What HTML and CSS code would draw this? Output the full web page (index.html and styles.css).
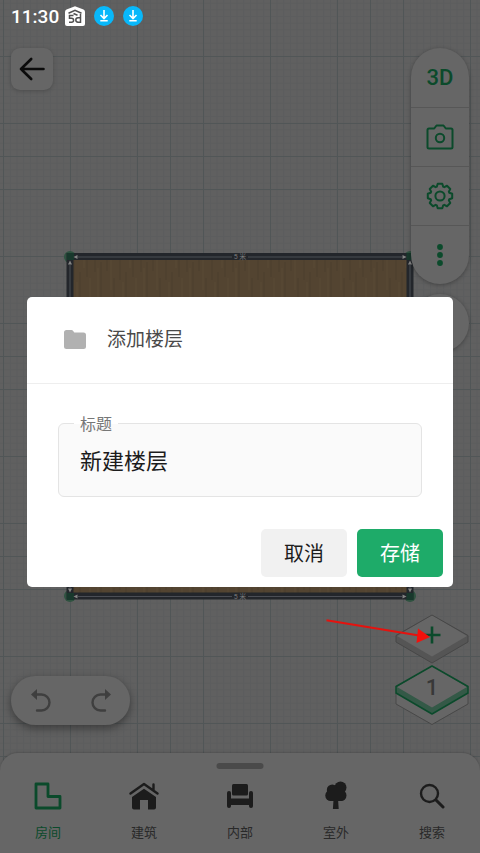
FILE: index.html
```html
<!DOCTYPE html>
<html lang="zh-CN">
<head>
<meta charset="utf-8">
<meta name="viewport" content="width=device-width, initial-scale=1">
<title>添加楼层</title>
<link rel="stylesheet" href="styles.css">
</head>
<body>
<div class="app">
  <svg class="plan" viewBox="0 0 480 853" preserveAspectRatio="xMidYMid slice" aria-hidden="true">
    <defs>
      <pattern id="fine" x="3.2" y="56" width="6.667" height="6.667" patternUnits="userSpaceOnUse">
        <path d="M0 .5H7M.5 0V7" stroke="#595b5c" stroke-width="1" fill="none" opacity=".65"/>
      </pattern>
      <pattern id="grid" x="3" y="56" width="200" height="200" patternUnits="userSpaceOnUse">
        <path d="M.5 0V200M67.5 0V200M134.5 0V200M167.5 0V200M0 .5H200M0 67.5H200M0 100.5H200M0 133.5H200" stroke="#515657" fill="none"/>
      </pattern>
      <pattern id="wood" width="46" height="62" patternUnits="userSpaceOnUse">
        <rect width="46" height="62" fill="#534431"/>
        <path d="M3 0v24M9 14v40M15 4v19M22 30v29M28 2v30M34 24v34M41 6v23" stroke="#4b3d2c" fill="none"/>
        <path d="M6 20v32M12 0v12M19 8v34M31 34v22M38 0v20M44 30v32" stroke="#594935" fill="none"/>
      </pattern>
    </defs>
    <rect width="480" height="853" fill="#606060"/>
    <rect width="480" height="853" fill="url(#fine)"/>
    <rect width="480" height="853" fill="url(#grid)"/>
    <circle cx="70" cy="257" r="6" fill="#2f5240"/>
    <circle cx="410" cy="257" r="6" fill="#2f5240"/>
    <circle cx="70" cy="596" r="6" fill="#2f5240"/>
    <circle cx="410" cy="596" r="6" fill="#2f5240"/>
    <rect x="70" y="256.500" width="340" height="339.500" fill="url(#wood)" stroke="#23262b" stroke-width="7"/>
    <path d="M78 257H232M248 257H402M78 596.500H232M248 596.500H402M70 265V588M410 265V588" stroke="#4b4e55" fill="none"/>
    <path d="M67 253h7v7h-7zM406.500 253h7v7h-7zM67 593h7v7h-7zM406.500 593h7v7h-7z" fill="#18382c"/>
    <path d="M73.500 257l4-2v4zM406.500 257l-4-2v4zM73.500 596.500l4-2v4zM406.500 596.500l-4-2v4zM70 260.500l-2 4h4zM410 260.500l-2 4h4zM70 592.500l-2-4h4zM410 592.500l-2-4h4z" fill="#858585"/>
    <text class="measure" x="240" y="259" text-anchor="middle">5 米</text>
    <text class="measure" x="240" y="599" text-anchor="middle">5 米</text>
  </svg>

  <header class="status">
    <span class="clock">11:30</span>
    <svg class="status-house" viewBox="0 0 20 20" aria-hidden="true">
      <path d="M10 .2 18.500 3.500Q20 4.200 20 6V18Q20 20 18 20H2Q0 20 0 18V6Q0 4.200 1.500 3.500z" fill="#fff"/>
      <path d="M3.500 7.200 10 4.300 16.500 7.200M8.500 9.500H4.500V12.200H6.500Q8.600 12.300 8.600 14.200T6.500 16.300H4M15.500 8V16.300H13Q10.800 16 10.800 14T13 11.800H15.500M8.500 7.500l4 1.800" fill="none" stroke="#505050" stroke-width="1.500"/>
    </svg>
    <svg class="status-download" viewBox="0 0 20 20" aria-hidden="true"><circle cx="10" cy="10" r="10" fill="#08b8fb"/><path d="M10 4v8M6.500 9l3.500 3.500L13.500 9M6.300 14.800h7.400" fill="none" stroke="#fff" stroke-width="1.600"/></svg>
    <svg class="status-download" viewBox="0 0 20 20" aria-hidden="true"><circle cx="10" cy="10" r="10" fill="#08b8fb"/><path d="M10 4v8M6.500 9l3.500 3.500L13.500 9M6.300 14.800h7.400" fill="none" stroke="#fff" stroke-width="1.600"/></svg>
  </header>

  <main class="workspace">
    <div class="row">
      <button class="back" type="button" aria-label="返回">
        <svg width="26" height="24" viewBox="0 0 26 24" fill="none" stroke="#0b0b0b" stroke-width="2.600" stroke-linecap="round" stroke-linejoin="round"><path d="M24.500 12H2M12.200 2 2 12l10.200 10"/></svg>
      </button>
      <div class="side">
        <div class="tools">
          <button type="button">3D</button>
          <button type="button" aria-label="相机">
            <svg width="28" height="26" viewBox="0 0 28 26" fill="none" stroke="#0b4a2b" stroke-width="2" stroke-linejoin="round"><path d="M3 4.500h5.200l2.300-3h7l2.300 3H25Q26.500 4.500 26.500 6v17Q26.500 24.500 25 24.500H3Q1.500 24.500 1.500 23V6Q1.500 4.500 3 4.500z"/><circle cx="14" cy="14" r="4.200"/></svg>
          </button>
          <button type="button" aria-label="设置">
            <svg width="28" height="28" viewBox="0 0 28 28" fill="none" stroke="#0b4a2b" stroke-width="2" stroke-linejoin="round"><path d="M11.700 1.800h4.600L17.200 4.700 18.300 5.160 21 3.750 24.250 7 22.840 9.700 23.300 10.800 26.200 11.700v4.600L23.300 17.200 22.840 18.300 24.250 21 21 24.250 18.300 22.840 17.200 23.300 16.300 26.200h-4.600L10.800 23.300 9.700 22.840 7 24.250 3.750 21 5.160 18.300 4.700 17.200 1.800 16.300v-4.600L4.700 10.800 5.160 9.700 3.750 7 7 3.750 9.700 5.160 10.800 4.700z"/><circle cx="14" cy="14" r="4.600"/></svg>
          </button>
          <button type="button" aria-label="更多">
            <svg width="8" height="24" viewBox="0 0 8 24" fill="#0b4a2b"><circle cx="4" cy="4" r="2.900"/><circle cx="4" cy="12" r="2.900"/><circle cx="4" cy="20" r="2.900"/></svg>
          </button>
        </div>
        <button class="round" type="button" aria-label="视图"></button>
      </div>
    </div>

    <div class="row row-end">
      <div class="history">
        <button type="button" aria-label="撤销">
          <svg width="20" height="24" viewBox="0 0 20 24"><path d="M0 5.500 6 0v11z" fill="#3f3f3f"/><path d="M5 5.500h5.500a7.800 7.800 0 0 1 0 16H6" fill="none" stroke="#3f3f3f" stroke-width="2.400" stroke-linecap="round"/></svg>
        </button>
        <button type="button" aria-label="重做">
          <svg width="20" height="24" viewBox="0 0 20 24"><path d="M20 5.500 14 0v11z" fill="#3f3f3f"/><path d="M15 5.500H9.500a7.800 7.800 0 0 0 0 16H14" fill="none" stroke="#3f3f3f" stroke-width="2.400" stroke-linecap="round"/></svg>
        </button>
      </div>
      <div class="floors">
        <button type="button" aria-label="添加楼层">
          <svg width="74" height="50" viewBox="0 0 74 50"><path d="M37 1 73 21.500V28L37 49 1 28V21.500z" fill="#555"/><path d="M37 1 72 22 37 42.500 2 22z" fill="#666"/><path d="M37 1 73 21.500V28L37 49 1 28V21.500z" fill="none" stroke="#474747" stroke-linejoin="round"/><path d="M37 12.500v17M28.500 21h17" stroke="#0b4a2b" stroke-width="2.600"/></svg>
        </button>
        <button class="floor" type="button" aria-label="楼层 1">
          <svg width="74" height="60" viewBox="0 0 74 60"><path d="M1 28V39L37 59.500 73 39V28" fill="#666" stroke="#484848"/><path d="M37 1 73 21.500V28L37 49 1 28V21.500z" fill="#345947"/><path d="M37 1 72 22 37 42.500 2 22z" fill="#666"/><path d="M37 1 73 21.500V28L37 49 1 28V21.500z" fill="none" stroke="#0b4a2b" stroke-width="1.500" stroke-linejoin="round"/><text x="37" y="30" text-anchor="middle">1</text></svg>
        </button>
      </div>
    </div>
  </main>

  <nav class="tabs" aria-label="目录">
    <span class="handle"></span>
    <a class="tab current" href="#room">
      <svg width="28" height="28" viewBox="0 0 28 28" fill="none" stroke="#0b4a2b" stroke-width="2.800" stroke-linejoin="round"><path d="M2 2H14V14.500H26V26H2z"/></svg>
      房间
    </a>
    <a class="tab" href="#building">
      <svg width="30" height="28" viewBox="0 0 30 28"><path d="M1.500 11.500 15 2l13.500 9.500M24.500 2.500V8" fill="none" stroke="#1c1c1c" stroke-width="2.400" stroke-linecap="round" stroke-linejoin="round"/><path d="M15 6.800 27 15V25.500q0 2-2 2H19V18h-8v9.500H5Q3 27.500 3 25.500V15z" fill="#1c1c1c"/></svg>
      建筑
    </a>
    <a class="tab" href="#interior">
      <svg width="28" height="28" viewBox="0 0 28 28" fill="#1c1c1c"><rect x="6" y="2" width="16" height="11.500" rx="1.500"/><rect x="1" y="9" width="4" height="17" rx="2"/><rect x="23" y="9" width="4" height="17" rx="2"/><path d="M3 16.500h22v6.500H3z"/></svg>
      内部
    </a>
    <a class="tab" href="#exterior">
      <svg width="24" height="30" viewBox="0 0 24 30" fill="#1c1c1c"><circle cx="16.500" cy="6.500" r="6"/><circle cx="8.300" cy="9" r="5.500"/><circle cx="6.800" cy="14.500" r="5.500"/><circle cx="17" cy="14.500" r="5.500"/><path d="M6 7h15v7l-3 6H6zM9.500 19h4.600l.6 9H8.900z"/></svg>
      室外
    </a>
    <a class="tab" href="#search">
      <svg width="26" height="26" viewBox="0 0 26 26" fill="none" stroke="#1c1c1c" stroke-width="2.400" stroke-linecap="round"><circle cx="10.500" cy="10.500" r="8.500"/><path d="M17 17l7 7" stroke-width="3"/></svg>
      搜索
    </a>
  </nav>
</div>

<div class="overlay">
  <form class="dialog" role="dialog" aria-modal="true" aria-labelledby="dialog-title">
    <header class="dialog-head">
      <svg width="22" height="20" viewBox="0 0 22 20" fill="#b1b1b1" aria-hidden="true"><path d="M2.500 0H7.500Q8.500 0 9 .8L10.300 2.500H19.500Q22 2.500 22 5V16.500Q22 19 19.500 19H2.500Q0 19 0 16.500V2.500Q0 0 2.500 0z"/></svg>
      <h1 id="dialog-title">添加楼层</h1>
    </header>
    <div class="field">
      <label for="floor-name">标题</label>
      <input id="floor-name" type="text" value="新建楼层">
    </div>
    <div class="actions">
      <button type="button">取消</button>
      <button class="primary" type="submit">存储</button>
    </div>
  </form>
</div>

<svg class="pointer" viewBox="0 0 480 853" preserveAspectRatio="xMidYMid slice" aria-hidden="true">
  <path d="M326.500 620.300 419 635.500" stroke="#e5120e" stroke-width="2"/>
  <path d="M418 628.500 430 637l-13.500 6z" fill="#f5100c"/>
</svg>
</body>
</html>
```
FILE: styles.css
```css
* {
  box-sizing: border-box;
}

body {
  margin: 0;
  font-family: Roboto, "Noto Sans CJK SC", sans-serif;
  background: #606060;
  color: #222;
}

button {
  display: flex;
  align-items: center;
  justify-content: center;
  margin: 0;
  padding: 0;
  border: 0;
  background: none;
  font: inherit;
  color: inherit;
}

svg {
  display: block;
  flex: none;
}

.app {
  position: relative;
  display: flex;
  flex-direction: column;
  min-height: 100vh;
}

.plan {
  position: absolute;
  inset: 0;
  width: 100%;
  height: 100%;
}

.measure {
  font-size: 7px;
  fill: #7a7a7a;
}

.status {
  position: relative;
  display: flex;
  align-items: center;
  gap: 9px;
  height: 32px;
  padding: 0 11px;
}

.clock {
  margin-right: -3px;
  font-size: 19px;
  font-weight: 500;
  color: #fff;
}

.status-house,
.status-download {
  width: 20px;
  height: 20px;
}

.workspace {
  position: relative;
  flex: 1;
  display: flex;
  flex-direction: column;
  justify-content: space-between;
  padding: 16px 11px 28px;
}

.row {
  display: flex;
  justify-content: space-between;
  align-items: flex-start;
}

.row-end {
  align-items: flex-end;
}

.back {
  width: 42px;
  height: 42px;
  border-radius: 9px;
  background: #666;
  box-shadow: 0 1px 4px rgba(0, 0, 0, 0.2);
}

.side {
  display: flex;
  flex-direction: column;
  gap: 10px;
}

.tools {
  width: 58px;
  overflow: hidden;
  border-radius: 29px;
  background: #666;
  box-shadow: 0 1px 4px rgba(0, 0, 0, 0.3);
}

.tools button {
  width: 100%;
  height: 59px;
  font-size: 22px;
  font-weight: 500;
  color: #0b4a2b;
}

.tools button + button {
  border-top: 1px solid #575757;
}

.round {
  width: 58px;
  height: 58px;
  border-radius: 50%;
  background: #666;
  box-shadow: 0 1px 4px rgba(0, 0, 0, 0.3);
}

.history {
  display: flex;
  align-items: center;
  justify-content: center;
  gap: 40px;
  width: 119px;
  height: 49px;
  border-radius: 25px;
  background: #666;
  box-shadow: 0 3px 9px rgba(0, 0, 0, 0.4);
}

.floors {
  display: flex;
  flex-direction: column;
  gap: 1px;
}

.floor text {
  font-size: 22px;
  font-weight: 500;
  fill: #383838;
}

.tabs {
  position: relative;
  display: grid;
  grid-template-columns: repeat(5, 1fr);
  height: 100px;
  padding-top: 26px;
  border-radius: 18px 18px 0 0;
  background: #666;
  box-shadow: 0 -1px 2px rgba(0, 0, 0, 0.15);
}

.handle {
  position: absolute;
  top: 10px;
  left: 50%;
  width: 47px;
  height: 6px;
  border-radius: 3px;
  background: #4a4a4a;
  transform: translateX(-50%);
}

.tab {
  display: grid;
  grid-template-rows: 34px 20px;
  row-gap: 10px;
  align-content: start;
  align-items: center;
  justify-items: center;
  font-size: 13px;
  line-height: 20px;
  color: #292929;
  text-decoration: none;
}

.tab.current {
  color: #0b4a2b;
}

.overlay {
  position: fixed;
  inset: 0;
  display: flex;
  align-items: center;
  padding: 30px 27px 0;
}

.dialog {
  flex: 1;
  overflow: hidden;
  border-radius: 5px;
  background: #fff;
}

.dialog-head {
  display: flex;
  align-items: center;
  gap: 21px;
  height: 87px;
  padding: 0 37px;
  border-bottom: 1px solid #eee;
}

.dialog-head h1 {
  margin: 0;
  font-size: 19px;
  font-weight: 400;
  line-height: 28px;
  color: #4a4a4a;
}

.field {
  position: relative;
  margin: 39px 31px 0;
}

.field label {
  position: absolute;
  top: -10px;
  left: 16px;
  padding: 0 6px;
  background: linear-gradient(#fff 11px, #fafafa 11px);
  font-size: 16px;
  line-height: 24px;
  color: #777;
}

.field input {
  display: block;
  width: 100%;
  height: 74px;
  padding: 0 21px 2px;
  border: 1px solid #e4e4e4;
  border-radius: 6px;
  outline: 0;
  background: #fafafa;
  font: inherit;
  font-size: 22px;
  color: #1c1c1c;
}

.actions {
  display: flex;
  justify-content: flex-end;
  gap: 10px;
  padding: 32px 10px 10px;
}

.actions button {
  width: 86px;
  height: 48px;
  border-radius: 5px;
  background: #f1f1f1;
  font-size: 20px;
  color: #1c1c1c;
}

.actions .primary {
  background: #1eab69;
  color: #fff;
}

.pointer {
  position: fixed;
  inset: 0;
  width: 100%;
  height: 100%;
  pointer-events: none;
}
```
